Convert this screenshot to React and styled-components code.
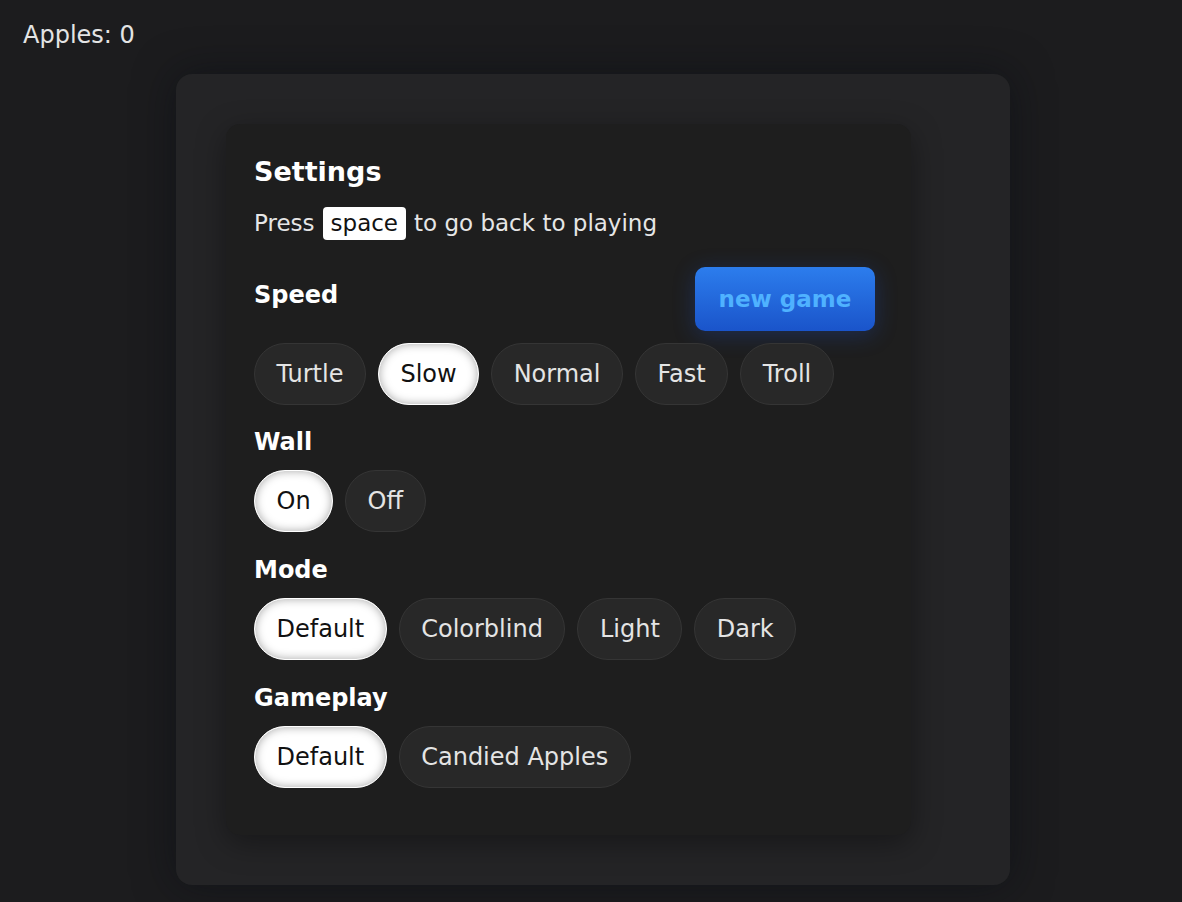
import styled, { createGlobalStyle } from "styled-components";

const GlobalStyle = createGlobalStyle`
  html, body {
    margin: 0;
    padding: 0;
    background: #1c1c1e;
    font-family: "DejaVu Sans", Verdana, sans-serif;
    color: #e6e6e6;
  }
`;

const Page = styled.div`
  min-height: 902px;
  padding: 20px 0 0 4px;
  box-sizing: border-box;
`;

const Score = styled.div`
  font-size: 24px;
  line-height: 30px;
  padding-left: 19px;
  color: #e4e4e4;
`;

const Board = styled.div`
  width: 834px;
  margin: 24px auto 0;
  padding: 50px;
  box-sizing: border-box;
  background: #242426;
  border-radius: 16px;
  box-shadow: 0 0 40px rgba(10, 12, 20, 0.55);
`;

const Card = styled.div`
  width: 685px;
  box-sizing: border-box;
  padding: 33px 28px 47px;
  background: #1e1e1e;
  border-radius: 14px;
  box-shadow: 0 8px 30px rgba(0, 0, 0, 0.35);
`;

const Title = styled.h2`
  margin: 0;
  font-size: 27px;
  line-height: 30px;
  font-weight: bold;
  color: #ffffff;
`;

const Hint = styled.p`
  margin: 20px 0 0;
  font-size: 23px;
  line-height: 28px;
  color: #e6e6e6;
`;

const Key = styled.kbd`
  font-family: inherit;
  display: inline-block;
  background: #ffffff;
  color: #111;
  border-radius: 4px;
  padding: 2px 8px 3px;
  line-height: 28px;
  margin: 0 8px;
`;

const HeaderRow = styled.div`
  display: flex;
  justify-content: space-between;
  align-items: center;
  margin-top: 27px;
  padding-right: 8px;
`;

const Label = styled.div`
  font-size: 24px;
  line-height: 26px;
  font-weight: bold;
  color: #ffffff;
  padding-bottom: ${(p) => p.$lift || 0}px;
`;

const NewGame = styled.button`
  width: 180px;
  height: 64px;
  border: none;
  border-radius: 10px;
  background: linear-gradient(180deg, #2c7ded 0%, #1a54ca 100%);
  color: #4fb2ff;
  font-family: inherit;
  font-size: 23px;
  font-weight: bold;
  box-shadow: 0 4px 22px rgba(30, 80, 200, 0.3);
  cursor: pointer;
`;

const Section = styled.div`
  margin-top: ${(p) => p.$top || 25}px;
`;

const Options = styled.div`
  display: flex;
  gap: 12px;
  margin-top: ${(p) => p.$top || 15}px;
`;

const Option = styled.button`
  height: 62px;
  padding: 0 21.5px;
  border-radius: 31px;
  font-family: inherit;
  font-size: 24px;
  cursor: pointer;
  border: 1px solid ${(p) => (p.$active ? "#ffffff" : "#353535")};
  background: ${(p) => (p.$active ? "#ffffff" : "#282828")};
  color: ${(p) => (p.$active ? "#111111" : "#e4e4e4")};
  box-shadow: ${(p) =>
    p.$active ? "inset 0 0 10px rgba(0, 0, 0, 0.35)" : "none"};
`;

const groups = [
  { label: "Wall", options: ["On", "Off"], active: "On", top: 24 },
  {
    label: "Mode",
    options: ["Default", "Colorblind", "Light", "Dark"],
    active: "Default",
  },
  {
    label: "Gameplay",
    options: ["Default", "Candied Apples"],
    active: "Default",
  },
];

const OptionRow = ({ options, active, top }) => (
  <Options $top={top}>
    {options.map((o) => (
      <Option key={o} $active={o === active}>
        {o}
      </Option>
    ))}
  </Options>
);

export default function App() {
  return (
    <>
      <GlobalStyle />
      <Page>
        <Score>Apples: 0</Score>
        <Board>
          <Card>
            <Title>Settings</Title>
            <Hint>
              Press<Key>space</Key>to go back to playing
            </Hint>
            <HeaderRow>
              <Label $lift={8}>Speed</Label>
              <NewGame>new game</NewGame>
            </HeaderRow>
            <OptionRow
              top={12}
              options={["Turtle", "Slow", "Normal", "Fast", "Troll"]}
              active="Slow"
            />
            {groups.map((g) => (
              <Section key={g.label} $top={g.top}>
                <Label>{g.label}</Label>
                <OptionRow options={g.options} active={g.active} />
              </Section>
            ))}
          </Card>
        </Board>
      </Page>
    </>
  );
}
